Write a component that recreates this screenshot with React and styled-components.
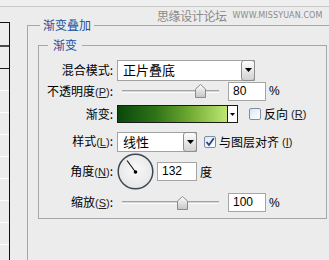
import React from "react";
import styled, { createGlobalStyle } from "styled-components";

const GlobalStyle = createGlobalStyle`
    html, body {
        margin: 0;
        padding: 0;
        background: #ececec;
    }
    body {
        font-family: "Noto Sans CJK SC", "Noto Sans", sans-serif;
        font-size: 12px;
        color: #000;
    }
`;

const Page = styled.div`
    position: relative;
    width: 329px;
    height: 260px;
    overflow: hidden;
    background: #ececec;
`;

const TopStrip = styled.div`
    height: 6px;
    background: #efefef;
    border-bottom: 1px solid #c9c9c9;
`;

const Watermark = styled.div`
    position: absolute;
    top: 9px;
    left: 157px;
    display: flex;
    align-items: center;
    gap: 6px;
    color: #8a8a8a;
    line-height: 14px;
    white-space: nowrap;
`;

const WatermarkCn = styled.span`
    font-size: 12px;
    letter-spacing: -0.4px;
`;

const WatermarkUrl = styled.span`
    font-family: "DejaVu Sans", sans-serif;
    font-size: 8px;
    letter-spacing: 0.1px;
`;

const Body = styled.div`
    display: flex;
    align-items: flex-start;
`;

const LayerList = styled.div`
    flex-shrink: 0;
    width: 9px;
    margin-top: 15px;
    border-top: 1px solid #111;
    border-right: 1px solid #111;
    height: 300px;
    display: flex;
    flex-direction: column;
`;

const LayerRow = styled.div`
    height: ${(p) => p.$h}px;
    flex-shrink: 0;
    border-bottom: ${(p) => p.$line};
`;

const Main = styled.div`
    flex-shrink: 0;
    padding-left: 17px;
    padding-top: 10px;
`;

const OuterGroup = styled.fieldset`
    margin: 0;
    width: 330px;
    height: 260px;
    padding: 0 0 0 10px;
    border: 1px solid #a7a7a7;
    box-sizing: border-box;
`;

const Legend = styled.legend`
    margin-left: ${(p) => p.$ml}px;
    padding: 0 ${(p) => p.$pad}px;
    color: #1f4f9c;
    font-size: 12px;
    line-height: 16px;
`;

const InnerGroup = styled.fieldset`
    margin: 4px 0 0 0;
    width: 289px;
    padding: 6px 0 5px 0;
    border: 1px solid #a7a7a7;
    box-sizing: border-box;
`;

const Row = styled.div`
    display: grid;
    grid-template-columns: 74px auto;
    column-gap: 4px;
    align-items: center;
    height: ${(p) => p.$h}px;
    margin-top: ${(p) => p.$mt || 0}px;
`;

const Label = styled.div`
    text-align: right;
    line-height: 16px;
    white-space: nowrap;
`;

const Key = styled.span`
    font-family: "Liberation Sans", sans-serif;
    font-size: 11px;
    color: #222;
    u {
        text-decoration: underline;
        text-underline-offset: 1px;
    }
`;

const Controls = styled.div`
    display: flex;
    align-items: center;
`;

const Select = styled.div`
    display: flex;
    align-items: center;
    justify-content: space-between;
    width: ${(p) => p.$w}px;
    height: ${(p) => p.$h}px;
    box-sizing: border-box;
    background: #fff;
    border: 1px solid #a2a2a2;
    padding: 0 0 0 5px;
    font-size: 13px;
    line-height: 16px;
`;

const SelectButton = styled.div`
    width: 14px;
    height: calc(100% + 2px);
    margin-right: -1px;
    box-sizing: border-box;
    border: 1px solid #8d8d8d;
    border-radius: 3px;
    background: linear-gradient(#fdfdfd, #d2d2d2);
    display: flex;
    align-items: center;
    justify-content: center;
`;

const Slider = styled.div`
    position: relative;
    width: 106px;
    height: 14px;
    padding: 0 4px 0 5px;
    box-sizing: border-box;
    display: flex;
    align-items: center;
`;

const Track = styled.div`
    flex: 1;
    height: 1px;
    background: #d6d6d6;
    border-top: 1px solid #a3a3a3;
    border-bottom: 1px solid #fafafa;
`;

const Thumb = styled.svg`
    position: absolute;
    top: 0;
    margin-left: -5px;
`;

const NumberBox = styled.div`
    width: ${(p) => p.$w}px;
    height: 19px;
    box-sizing: border-box;
    margin-left: ${(p) => p.$ml || 0}px;
    background: #fff;
    border: 1px solid #a5a5a5;
    padding-left: 4px;
    font-family: "Liberation Sans", sans-serif;
    font-size: 12px;
    line-height: 17px;
`;

const Unit = styled.span`
    margin-left: ${(p) => p.$ml || 3}px;
    font-size: 12px;
    line-height: 16px;
`;

const PercentUnit = styled(Unit)`
    font-family: "Liberation Sans", sans-serif;
`;

const GradientPicker = styled.div`
    display: flex;
    width: 121px;
    height: 18px;
    box-sizing: border-box;
    border: 1px solid #1a1a1a;
    background: #fff;
`;

const GradientBar = styled.div`
    flex: 1;
    background: linear-gradient(90deg, #0a470c 0%, #2f7418 35%, #6ea832 65%, #bde872 100%);
    border-right: 1px solid #1a1a1a;
`;

const GradientArrow = styled.div`
    width: 9px;
    display: flex;
    align-items: center;
    justify-content: center;
`;

const CheckOption = styled.label`
    display: flex;
    align-items: center;
    margin-left: ${(p) => p.$ml}px;
    gap: 3px;
    font-size: 12px;
    line-height: 16px;
    white-space: nowrap;
`;

const CheckBox = styled.span`
    width: 12px;
    height: 12px;
    box-sizing: border-box;
    border: 1px solid #7d8ea4;
    border-radius: 2px;
    background: linear-gradient(135deg, #dde6f2 0%, #f6f9fc 70%, #ffffff 100%);
    display: flex;
    align-items: center;
    justify-content: center;
`;

const Dial = styled.svg`
    display: block;
`;

function Arrow({ w = 7, h = 4 }) {
    return (
        <svg width={w} height={h} viewBox={`0 0 ${w} ${h}`}>
            <path d={`M0 0 L${w} 0 L${w / 2} ${h} Z`} fill="#000" />
        </svg>
    );
}

function SliderControl({ pos }) {
    return (
        <Slider>
            <Track />
            <Thumb width="11" height="14" viewBox="0 0 11 14" style={{ left: `${5 + pos * 97}px` }}>
                <defs>
                    <linearGradient id="thumbFill" x1="0" y1="0" x2="0" y2="1">
                        <stop offset="0" stopColor="#ffffff" />
                        <stop offset="1" stopColor="#c4c4c4" />
                    </linearGradient>
                </defs>
                <path d="M0.5 5 L5.5 0.5 L10.5 5 L10.5 13.5 L0.5 13.5 Z" fill="url(#thumbFill)" stroke="#8b8b8b" />
            </Thumb>
        </Slider>
    );
}

function Mnemonic({ k }) {
    return (
        <Key>
            (<u>{k}</u>)
        </Key>
    );
}

const layerRows = [
    { h: 22, line: "2px solid #4a4a4a" },
    { h: 21, line: "1px solid #1a1a1a" },
    ...Array.from({ length: 9 }, () => ({ h: 21, line: "1px solid #ffffff" })),
];

export default function App() {
    return (
        <Page>
            <GlobalStyle />
            <TopStrip />
            <Watermark>
                <WatermarkCn>思缘设计论坛</WatermarkCn>
                <WatermarkUrl>WWW.MISSYUAN.COM</WatermarkUrl>
            </Watermark>
            <Body>
                <LayerList>
                    {layerRows.map((r, i) => (
                        <LayerRow key={i} $h={r.h} $line={r.line} />
                    ))}
                </LayerList>
                <Main>
                    <OuterGroup>
                        <Legend $ml={2} $pad={3}>渐变叠加</Legend>
                        <InnerGroup>
                            <Legend $ml={9} $pad={5}>渐变</Legend>

                            <Row $h={22}>
                                <Label>混合模式:</Label>
                                <Controls>
                                    <Select $w={138} $h={21}>
                                        正片叠底
                                        <SelectButton>
                                            <Arrow />
                                        </SelectButton>
                                    </Select>
                                </Controls>
                            </Row>

                            <Row $h={20}>
                                <Label>
                                    不透明度<Mnemonic k="P" />:
                                </Label>
                                <Controls>
                                    <SliderControl pos={0.8} />
                                    <NumberBox $w={38} $ml={5}>80</NumberBox>
                                    <PercentUnit>%</PercentUnit>
                                </Controls>
                            </Row>

                            <Row $h={20} $mt={3}>
                                <Label>渐变:</Label>
                                <Controls>
                                    <GradientPicker>
                                        <GradientBar />
                                        <GradientArrow>
                                            <Arrow w={5} h={3} />
                                        </GradientArrow>
                                    </GradientPicker>
                                    <CheckOption $ml={11}>
                                        <CheckBox />
                                        反向<Mnemonic k="R" />
                                    </CheckOption>
                                </Controls>
                            </Row>

                            <Row $h={21} $mt={7}>
                                <Label>
                                    样式<Mnemonic k="L" />:
                                </Label>
                                <Controls>
                                    <Select $w={80} $h={20}>
                                        线性
                                        <SelectButton>
                                            <Arrow />
                                        </SelectButton>
                                    </Select>
                                    <CheckOption $ml={7}>
                                        <CheckBox>
                                            <svg width="10" height="10" viewBox="0 0 10 10">
                                                <path d="M1.5 5 L4 8 L8.8 1.2" fill="none" stroke="#24478a" strokeWidth="1.8" />
                                            </svg>
                                        </CheckBox>
                                        与图层对齐<Mnemonic k="I" />
                                    </CheckOption>
                                </Controls>
                            </Row>

                            <Row $h={36} $mt={1}>
                                <Label>
                                    角度<Mnemonic k="N" />:
                                </Label>
                                <Controls>
                                    <Dial width="37" height="37" viewBox="0 0 37 37">
                                        <defs>
                                            <radialGradient id="dialFill" cx="0.5" cy="0.45" r="0.6">
                                                <stop offset="0" stopColor="#fafafa" />
                                                <stop offset="1" stopColor="#e4e4e4" />
                                            </radialGradient>
                                        </defs>
                                        <circle cx="18.5" cy="18.5" r="17.3" fill="url(#dialFill)" stroke="#3e4654" strokeWidth="1.5" />
                                        <line x1="18.5" y1="19" x2="10" y2="7.5" stroke="#111" strokeWidth="1.1" />
                                        <circle cx="18.5" cy="19" r="1.8" fill="#000" />
                                    </Dial>
                                    <NumberBox $w={40} $ml={3}>132</NumberBox>
                                    <Unit $ml={3}>度</Unit>
                                </Controls>
                            </Row>

                            <Row $h={21} $mt={3}>
                                <Label>
                                    缩放<Mnemonic k="S" />:
                                </Label>
                                <Controls>
                                    <SliderControl pos={0.62} />
                                    <NumberBox $w={38} $ml={5}>100</NumberBox>
                                    <PercentUnit>%</PercentUnit>
                                </Controls>
                            </Row>
                        </InnerGroup>
                    </OuterGroup>
                </Main>
            </Body>
        </Page>
    );
}
